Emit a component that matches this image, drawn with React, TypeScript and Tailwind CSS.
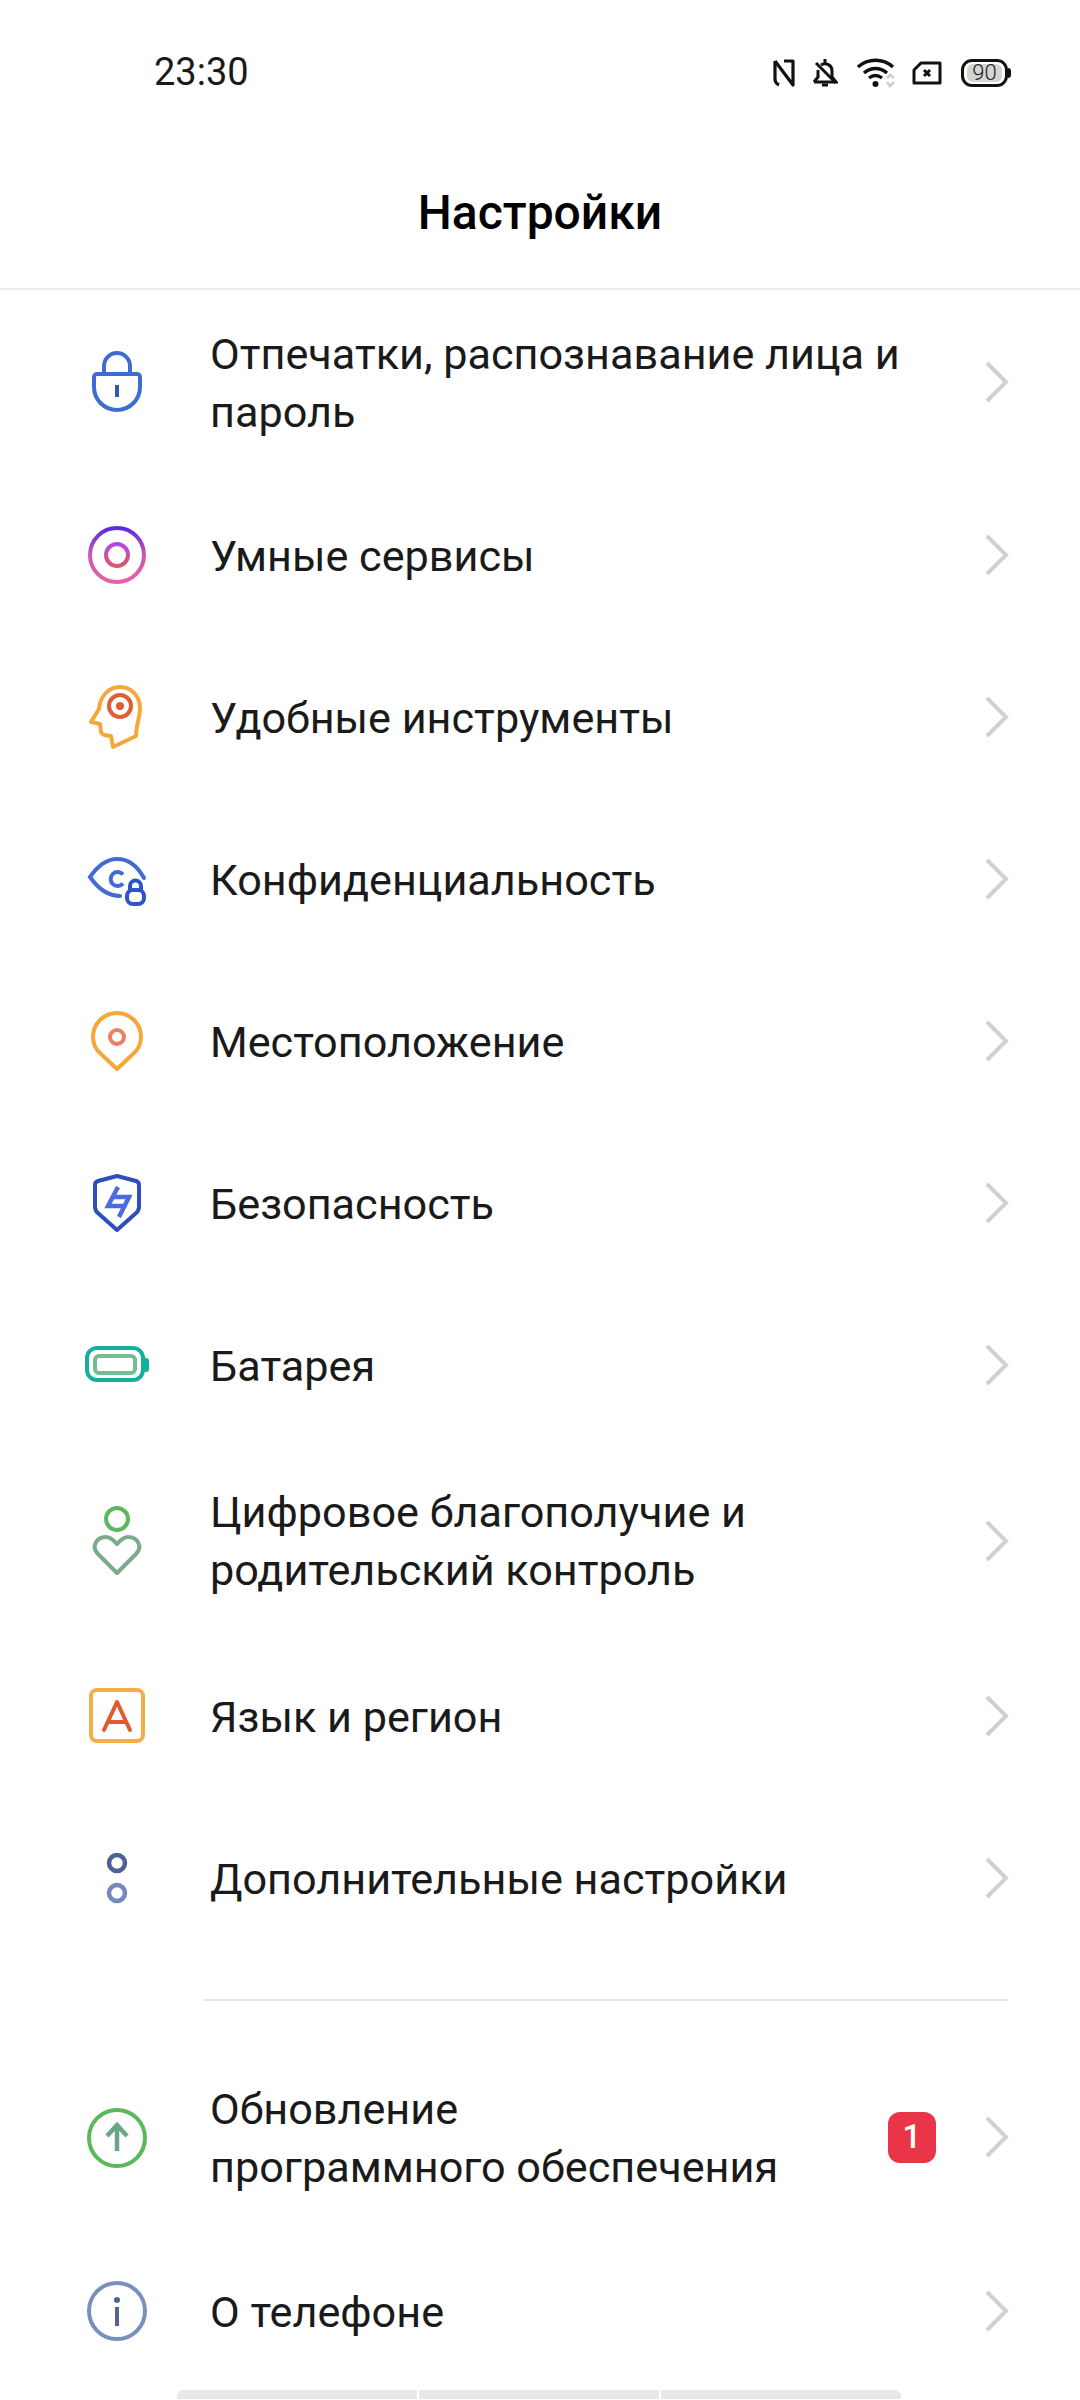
import { ReactNode } from "react";

// All list icons share an 80x80 box, centred on the row
function Icon({ children }: { children: ReactNode }) {
  return (
    <svg width="80" height="80" viewBox="0 0 80 80" fill="none" strokeWidth={4} className="shrink-0">
      {children}
    </svg>
  );
}

function LockIcon() {
  return (
    <Icon>
      <path d="M27 32V24a13 13 0 0 1 26 0v8" stroke="#3f6bd3" />
      <path d="M20 32h40a3 3 0 0 1 3 3v10a23 23 0 0 1-46 0V35a3 3 0 0 1 3-3z" stroke="#3f6bd3" />
      <path d="M40 43v12" stroke="#3558b8" />
    </Icon>
  );
}

function ServicesIcon() {
  return (
    <Icon>
      <defs>
        <linearGradient id="svc" x1="0" y1="0" x2="0" y2="1">
          <stop offset="0" stopColor="#5a2be0" />
          <stop offset="0.5" stopColor="#c85bb0" />
          <stop offset="1" stopColor="#ea5fa5" />
        </linearGradient>
        <linearGradient id="svc2" x1="0" y1="0" x2="0" y2="1">
          <stop offset="0" stopColor="#b04ae0" />
          <stop offset="1" stopColor="#e0566e" />
        </linearGradient>
      </defs>
      <circle cx="40" cy="40" r="27" stroke="url(#svc)" />
      <circle cx="40" cy="40" r="11" stroke="url(#svc2)" />
    </Icon>
  );
}

function HeadIcon() {
  return (
    <Icon>
      <path
        d="M43 10C55 10 63 20 63 31C63 41 59 48 59 59L36 70L34 59C30 58 25 59 24 55L23 47L14 45L22 32C23 20 31 10 43 10Z"
        stroke="#f5a83a"
        strokeLinejoin="round"
      />
      <circle cx="43" cy="29" r="11" stroke="#df5f35" />
      <circle cx="43" cy="29" r="4" fill="#df5f35" />
    </Icon>
  );
}

function EyeIcon() {
  return (
    <Icon>
      <path d="M43 57C30 57 20 48 13 38C20 28 28 20 40 20C52 20 61 28 67 39" stroke="#3f6bd3" strokeLinecap="round" />
      <path d="M46 35.500A7 7 0 1 0 46 44.500" stroke="#3f6bd3" />
      <rect x="50" y="51" width="17" height="14" rx="6" stroke="#2f55c4" />
      <path d="M53 51v-4a5.500 5.500 0 0 1 11 0v4" stroke="#2f55c4" />
    </Icon>
  );
}

function PinIcon() {
  return (
    <Icon>
      <path
        d="M40 68L24 53C18 48 16 42 16 36A24 24 0 0 1 64 36C64 42 62 48 56 53Z"
        stroke="#f5a83a"
        strokeLinejoin="round"
      />
      <circle cx="40" cy="36" r="7" stroke="#ee7f60" />
    </Icon>
  );
}

function ShieldIcon() {
  return (
    <Icon>
      <path
        d="M40 13L59 18Q62 19 62 22L62 44Q62 48 58 51L40 67L22 51Q18 48 18 44L18 22Q18 19 21 18Z"
        stroke="#2c4fbc"
        strokeLinejoin="round"
      />
      <path d="M41 24L31 43H46M36 34H52L42 54" stroke="#4a6ce0" strokeWidth={4.500} />
    </Icon>
  );
}

function BatteryIcon() {
  return (
    <Icon>
      <rect x="10" y="23" width="56" height="32" rx="10" stroke="#14b09c" />
      <path d="M68 33h1a3 3 0 0 1 3 3v8a3 3 0 0 1-3 3h-1z" fill="#14b09c" />
      <rect x="18" y="31" width="40" height="17" rx="4" stroke="#72bd94" />
    </Icon>
  );
}

function WellbeingIcon() {
  return (
    <Icon>
      <circle cx="40" cy="18" r="11" stroke="#5cb85c" />
      <path
        d="M40 72L21 53C14 46 19 36 29 36C34 36 37 40 40 43C43 40 46 36 51 36C61 36 66 46 59 53Z"
        stroke="#79ab8c"
        strokeLinejoin="round"
      />
    </Icon>
  );
}

function LanguageIcon() {
  return (
    <Icon>
      <rect x="14" y="14" width="52" height="51" rx="6" stroke="#f5ad45" />
      <path d="M27 54L40 26L53 54M31 46H49" stroke="#df5a30" strokeLinecap="round" strokeLinejoin="round" />
    </Icon>
  );
}

function MoreIcon() {
  return (
    <Icon>
      <circle cx="40" cy="25" r="8" stroke="#4e6197" strokeWidth={4.500} />
      <circle cx="40" cy="55" r="8" stroke="#7488bb" strokeWidth={4.500} />
    </Icon>
  );
}

function UpdateIcon() {
  return (
    <Icon>
      <circle cx="40" cy="41" r="28" stroke="#5cb85c" />
      <path d="M40 54V27M30 39L40 28L50 39" stroke="#6aa585" strokeWidth={4.500} />
    </Icon>
  );
}

function InfoIcon() {
  return (
    <Icon>
      <circle cx="40" cy="40" r="28" stroke="#7a8fbd" />
      <circle cx="40" cy="29" r="3" fill="#55648f" />
      <path d="M40 36v19" stroke="#55648f" />
    </Icon>
  );
}

function Chevron() {
  return (
    <svg width="26" height="44" viewBox="0 0 26 44" fill="none" className="shrink-0">
      <path d="M3 3l19 19L3 41" stroke="#d0d0d0" strokeWidth={4} />
    </svg>
  );
}

function StatusIcons() {
  return (
    <div className="flex items-center">
      <svg width="22" height="28" viewBox="0 0 22 28" fill="none" stroke="#111" strokeWidth={3.200}>
        <path d="M2 2L20 26V2H11" strokeLinejoin="round" />
        <path d="M2 2V20Q2 24 6 26" />
      </svg>
      <svg width="26" height="30" viewBox="0 0 26 30" fill="none" stroke="#111" strokeWidth={3} className="ml-[17px]">
        <path d="M2 24H24L20 19V13A7 7 0 0 0 9 7M6 12V19L2 24" />
        <path d="M13 1V5M10 27H16M4 5L24 25" />
      </svg>
      <svg width="40" height="30" viewBox="0 0 40 30" fill="none" className="ml-[19px]">
        <path d="M1 9C11 0 26 0 36 9M7 15C14 9 23 9 30 15M12 20C16 17 21 17 25 20" stroke="#111" strokeWidth={3.400} />
        <circle cx="18.500" cy="26" r="3" fill="#111" />
        <path d="M30 20L33 17L37 20M30 24L33 28L37 24" stroke="#cfcfcf" strokeWidth={2.600} />
      </svg>
      <svg width="30" height="24" viewBox="0 0 30 24" fill="none" className="ml-[15px]">
        <path d="M9 2H28V22H2V9Z" stroke="#111" strokeWidth={3} strokeLinejoin="round" />
        <path d="M12 9L18 15M18 9L12 15" stroke="#111" strokeWidth={3} />
      </svg>
      <div className="ml-[19px] flex items-center">
        <div className="flex h-[28px] w-[47px] items-center rounded-[11px] border-[3px] border-[#111] px-[3px]">
          <div className="flex h-[18px] w-[36px] items-center justify-center rounded-[6px] bg-[#d4d4d4] text-[22px] font-light leading-none text-[#222]">
            90
          </div>
        </div>
        <div className="h-[10px] w-[3px] rounded-r-sm bg-[#111]" />
      </div>
    </div>
  );
}

function Row({
  icon,
  lines,
  height = "h-[162px]",
  badge,
}: {
  icon: ReactNode;
  lines: string[];
  height?: string;
  badge?: string;
}) {
  return (
    <div className={`flex items-center pl-[77px] pr-[70px] ${height}`}>
      {icon}
      <div className="ml-[53px] flex-1 pt-[3px] text-[43.2px] leading-[58px] text-[#1a1a1a]">
        {lines.map((line) => (
          <div key={line} className="whitespace-nowrap">
            {line}
          </div>
        ))}
      </div>
      {badge && (
        <div className="mr-[48px] flex h-[51px] w-[48px] items-center justify-center rounded-[12px] bg-[#ea3447] text-[33px] font-medium text-white">
          {badge}
        </div>
      )}
      <Chevron />
    </div>
  );
}

export default function App() {
  return (
    <div className="h-[2400px] overflow-hidden bg-white font-['Roboto',sans-serif]">
      <div className="flex h-[144px] items-start justify-between pt-[46px] pl-[154px] pr-[69px]">
        <span className="text-[38px] leading-[52px] text-[#1a1a1a]">23:30</span>
        <div className="pt-[12px]">
          <StatusIcons />
        </div>
      </div>
      <div className="flex h-[146px] items-start justify-center border-b-2 border-[#ececec] pt-[38px]">
        <h1 className="text-[48px] font-medium leading-[62px] text-black">Настройки</h1>
      </div>
      <Row icon={<LockIcon />} lines={["Отпечатки, распознавание лица и", "пароль"]} height="h-[184px]" />
      <Row icon={<ServicesIcon />} lines={["Умные сервисы"]} />
      <Row icon={<HeadIcon />} lines={["Удобные инструменты"]} />
      <Row icon={<EyeIcon />} lines={["Конфиденциальность"]} />
      <Row icon={<PinIcon />} lines={["Местоположение"]} />
      <Row icon={<ShieldIcon />} lines={["Безопасность"]} />
      <Row icon={<BatteryIcon />} lines={["Батарея"]} />
      <Row icon={<WellbeingIcon />} lines={["Цифровое благополучие и", "родительский контроль"]} height="h-[189px]" />
      <Row icon={<LanguageIcon />} lines={["Язык и регион"]} />
      <Row icon={<MoreIcon />} lines={["Дополнительные настройки"]} />
      <div className="mt-[40px] mb-[41px] ml-[204px] mr-[72px] h-[2px] bg-[#e4e4e4]" />
      <Row icon={<UpdateIcon />} lines={["Обновление", "программного обеспечения"]} height="h-[190px]" badge="1" />
      <Row icon={<InfoIcon />} lines={["О телефоне"]} height="h-[158px]" />
      <div className="ml-[177px] flex h-[9px] w-[724px] gap-[2px]">
        <div className="flex-1 rounded-tl-[6px] bg-[#e8e8e8]" />
        <div className="flex-1 bg-[#e8e8e8]" />
        <div className="flex-1 rounded-tr-[6px] bg-[#e8e8e8]" />
      </div>
    </div>
  );
}
